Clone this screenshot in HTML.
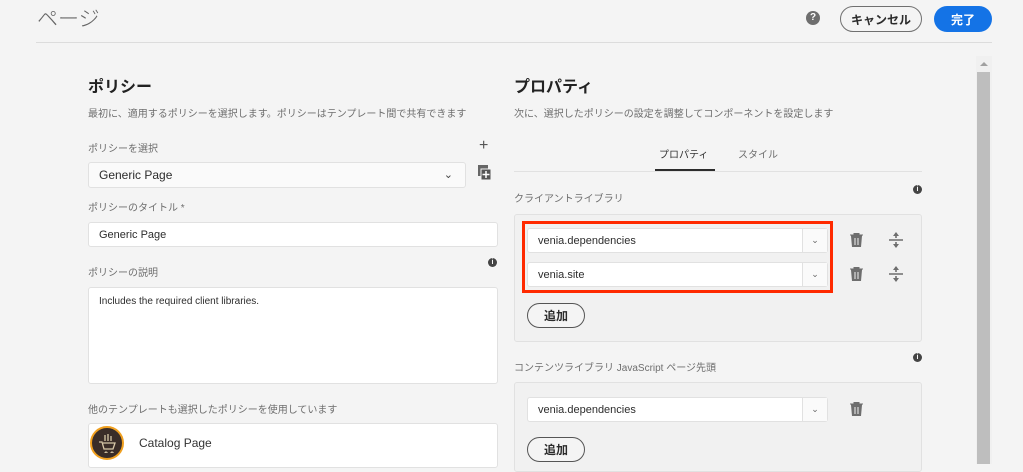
<!DOCTYPE html>
<html><head><meta charset="utf-8"><style>
*{box-sizing:border-box;margin:0;padding:0}
body{width:1023px;height:464px;overflow:hidden;background:#f4f4f4;font-family:"Liberation Sans","Noto Sans CJK JP",sans-serif;color:#2c2c2c;position:relative}
.a{position:absolute}
.lbl{font-size:10px;color:#6e6e6e;white-space:nowrap}
.h{font-size:16px;font-weight:bold;color:#222}
.inp{background:#fff;border:1px solid #e1e1e1;border-radius:3px;font-size:11px;padding-left:10px;display:flex;align-items:center}
.dd{position:absolute;right:0;top:0;bottom:0;width:25px;border-left:1px solid #e1e1e1;background:#fafafa;display:flex;align-items:center;justify-content:center;font-size:9px;color:#666}
.btn{border:1px solid #555;border-radius:13px;font-size:12px;font-weight:bold;display:flex;align-items:center;justify-content:center;background:#f4f4f4}
.info{width:9px;height:9px;border-radius:50%;background:#444;color:#fff;font-size:7px;font-weight:bold;text-align:center;line-height:9px}
</style></head><body>
<div class="a" style="left:37px;top:3px;font-size:21px;color:#666;font-weight:300">ページ</div>
<div class="a" style="left:36px;top:42px;width:956px;height:1px;background:#dcdcdc"></div>
<div class="a" style="left:806px;top:11px;width:14px;height:14px;border-radius:50%;background:#6e6e6e;color:#fff;font-size:10px;font-weight:bold;text-align:center;line-height:14px">?</div>
<div class="a btn" style="left:840px;top:6px;width:82px;height:26px;border-color:#707070">キャンセル</div>
<div class="a" style="left:934px;top:6px;width:58px;height:26px;border-radius:13px;background:#1473e6;color:#fff;font-size:12px;font-weight:bold;display:flex;align-items:center;justify-content:center">完了</div>
<div class="a" style="left:976px;top:56px;width:16px;height:408px;background:#f0f0f0"></div>
<div class="a" style="left:980px;top:62px;width:0;height:0;border-left:4px solid transparent;border-right:4px solid transparent;border-bottom:4px solid #a0a0a0"></div>
<div class="a" style="left:977px;top:72px;width:13px;height:392px;background:#bebebe"></div>

<div class="a h" style="left:88px;top:73px">ポリシー</div>
<div class="a lbl" style="left:88px;top:105px">最初に、適用するポリシーを選択します。ポリシーはテンプレート間で共有できます</div>
<div class="a lbl" style="left:88px;top:140px">ポリシーを選択</div>
<div class="a" style="left:479px;top:137px;font-size:16px;color:#555">+</div>
<div class="a inp" style="left:88px;top:162px;width:378px;height:26px;background:#fafafa;font-size:12px">Generic Page<span class="a" style="right:12px;top:5px;font-size:11px;color:#444">⌄</span></div>
<svg class="a" style="left:478px;top:165px" width="14" height="16"><rect x="0" y="0" width="10" height="11" fill="#666"/><rect x="3" y="4" width="10" height="11" fill="#555" stroke="#f4f4f4"/><path d="M8 6v7M4.5 9.5h7" stroke="#fff" stroke-width="1.5"/></svg>
<div class="a lbl" style="left:88px;top:199px">ポリシーのタイトル *</div>
<div class="a inp" style="left:88px;top:222px;width:410px;height:25px">Generic Page</div>
<div class="a lbl" style="left:88px;top:264px">ポリシーの説明</div>
<div class="a info" style="left:488px;top:258px">i</div>
<div class="a" style="left:88px;top:287px;width:410px;height:97px;background:#fff;border:1px solid #e1e1e1;border-radius:3px;font-size:10px;padding:8px 10px">Includes the required client libraries.</div>
<div class="a lbl" style="left:88px;top:401px">他のテンプレートも選択したポリシーを使用しています</div>
<div class="a" style="left:88px;top:423px;width:410px;height:45px;background:#fff;border:1px solid #e1e1e1;border-radius:3px"></div>
<div class="a" style="left:90px;top:426px;width:34px;height:34px;border-radius:50%;background:#3a2d28;border:2px solid #f0a020"></div>
<svg class="a" style="left:97px;top:433px" width="20" height="20"><path d="M2 9h3l2 7h9l2-6H6M9 19a1 1 0 1 0 .1 0M15 19a1 1 0 1 0 .1 0M8 8V2M11 8V1M14 8V3" stroke="#d8c8a8" stroke-width="1.3" fill="none"/></svg>
<div class="a" style="left:139px;top:436px;font-size:12px;color:#333">Catalog Page</div>

<div class="a h" style="left:514px;top:73px">プロパティ</div>
<div class="a lbl" style="left:514px;top:105px">次に、選択したポリシーの設定を調整してコンポーネントを設定します</div>
<div class="a" style="left:514px;top:171px;width:408px;height:1px;background:#e1e1e1"></div>
<div class="a lbl" style="left:659px;top:146px;color:#333">プロパティ</div>
<div class="a" style="left:655px;top:169px;width:60px;height:2px;background:#2c2c2c"></div>
<div class="a lbl" style="left:738px;top:146px">スタイル</div>
<div class="a lbl" style="left:514px;top:190px">クライアントライブラリ</div>
<div class="a info" style="left:913px;top:185px">i</div>
<div class="a" style="left:514px;top:214px;width:408px;height:128px;border:1px solid #e1e1e1;border-radius:3px;background:#f1f1f1"></div>
<div class="a inp" style="left:527px;top:228px;width:301px;height:25px">venia.dependencies<div class="dd">⌄</div></div>
<div class="a inp" style="left:527px;top:262px;width:301px;height:25px">venia.site<div class="dd">⌄</div></div>
<div class="a" style="left:522px;top:221px;width:311px;height:72px;border:3px solid #ff2a00"></div>
<svg class="a" style="left:850px;top:233px" width="13" height="14"><path d="M0 2h13M4 2V0h5v2M1.5 3h10l-1 11h-8z" fill="#6e6e6e" stroke="#6e6e6e"/><path d="M5 5v7M8 5v7" stroke="#f1f1f1"/></svg>
<svg class="a" style="left:850px;top:267px" width="13" height="14"><path d="M0 2h13M4 2V0h5v2M1.5 3h10l-1 11h-8z" fill="#6e6e6e" stroke="#6e6e6e"/><path d="M5 5v7M8 5v7" stroke="#f1f1f1"/></svg>
<svg class="a" style="left:889px;top:232px" width="14" height="16"><path d="M0 8h14M7 1v5M7 10v5" stroke="#6e6e6e" stroke-width="1.6" fill="none"/><path d="M4 4l3-4 3 4zM4 12l3 4 3-4z" fill="#6e6e6e"/></svg>
<svg class="a" style="left:889px;top:266px" width="14" height="16"><path d="M0 8h14M7 1v5M7 10v5" stroke="#6e6e6e" stroke-width="1.6" fill="none"/><path d="M4 4l3-4 3 4zM4 12l3 4 3-4z" fill="#6e6e6e"/></svg>
<div class="a btn" style="left:527px;top:303px;width:58px;height:25px">追加</div>
<div class="a lbl" style="left:514px;top:359px">コンテンツライブラリ JavaScript ページ先頭</div>
<div class="a info" style="left:913px;top:353px">i</div>
<div class="a" style="left:514px;top:382px;width:408px;height:90px;border:1px solid #e1e1e1;border-radius:3px;background:#f1f1f1"></div>
<div class="a inp" style="left:527px;top:397px;width:301px;height:25px">venia.dependencies<div class="dd">⌄</div></div>
<svg class="a" style="left:850px;top:402px" width="13" height="14"><path d="M0 2h13M4 2V0h5v2M1.5 3h10l-1 11h-8z" fill="#6e6e6e" stroke="#6e6e6e"/><path d="M5 5v7M8 5v7" stroke="#f1f1f1"/></svg>
<div class="a btn" style="left:527px;top:437px;width:58px;height:25px">追加</div>
</body></html>
